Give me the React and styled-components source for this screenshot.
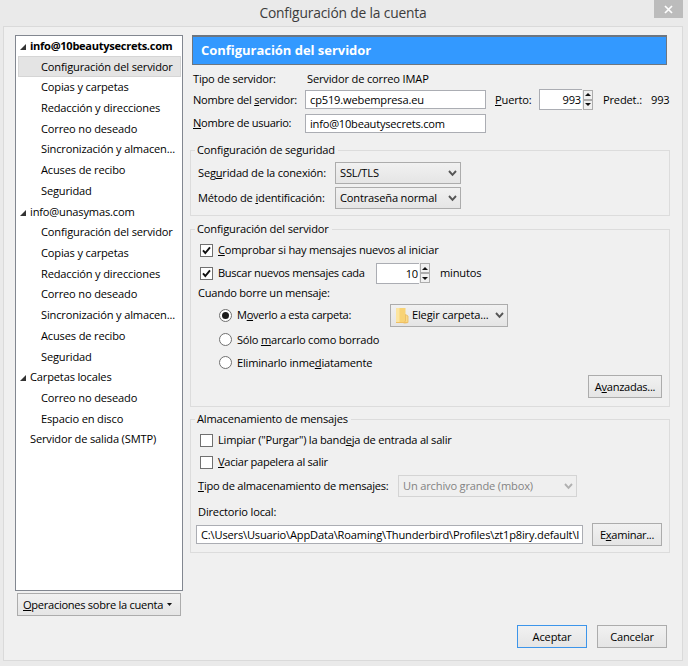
import React from 'react';
import styled, { createGlobalStyle } from 'styled-components';

const GlobalStyle = createGlobalStyle`
    * {
        box-sizing: border-box;
    }
    body {
        margin: 0;
        background: #eaeaea;
        color: #000;
        font-family: 'Open Sans', 'Noto Sans', sans-serif;
        font-size: 11.1px;
        line-height: 16px;
        letter-spacing: -0.17px;
    }
    u {
        text-underline-offset: 1px;
        text-decoration-thickness: 1px;
        text-decoration-skip-ink: none;
    }
`;

const Window = styled.div`
    width: 688px;
    height: 666px;
    overflow: hidden;
    background: #eaeaea;
`;

const TitleBar = styled.div`
    display: grid;
    grid-template-columns: 29px 1fr 29px;
    height: 26px;
    padding: 0 5px 0 3px;
`;

const Title = styled.div`
    grid-column: 2;
    text-align: center;
    color: #3c3c3c;
    font-size: 13.8px;
    line-height: 26px;
`;

const CloseButton = styled.div`
    display: flex;
    align-items: center;
    justify-content: center;
    width: 29px;
    height: 18px;
    background: #bcbcbc;
`;

const Client = styled.div`
    display: flex;
    width: 680px;
    height: 635px;
    margin-left: 3px;
    padding: 8px 0 0 11px;
    border: 1px solid #dadada;
    background: #f0f0f0;
`;

const Sidebar = styled.div`
    flex: none;
    width: 168px;
    margin-right: 7px;
`;

const Tree = styled.div`
    height: 556px;
    padding: 0 1px 0 2px;
    border: 1px solid #828790;
    background: #fff;
`;

const TreeRow = styled.div`
    display: flex;
    align-items: center;
    height: 20.72px;
    padding-left: ${props => (props.child ? 22 : 1)}px;
    white-space: nowrap;
    font-weight: ${props => (props.bold ? 700 : 400)};
    border: 1px solid ${props => (props.selected ? '#d5d5d5' : 'transparent')};
    background: ${props => (props.selected ? '#e4e4e4' : 'none')};
    &:first-child {
        height: 20.2px;
    }
`;

const Twisty = styled.div`
    display: flex;
    width: 10px;
    padding: 2px 0 0 0;
`;

const Text = styled.span`
    flex: none;
    width: ${props => (props.w ? props.w + 'px' : 'auto')};
    white-space: nowrap;
    letter-spacing: ${props => (props.track ? props.track + 'px' : 'inherit')};
`;

const Button = styled.div`
    display: flex;
    flex: none;
    align-items: center;
    justify-content: center;
    width: ${props => props.w}px;
    height: 23px;
    border: 1px solid ${props => (props.primary ? '#3d95ea' : '#acacac')};
    background: linear-gradient(#f1f1f1, #e5e5e5);
`;

const AccountButton = styled(Button)`
    justify-content: flex-start;
    gap: 4px;
    margin: 2px 0 0 2px;
    padding-left: 5px;
`;

const Panel = styled.div`
    width: 481px;
`;

const Header = styled.div`
    width: 475px;
    height: 30px;
    margin-left: 2px;
    padding-left: 8px;
    border: 1px solid #6d7680;
    border-top-width: 2px;
    background: #3399ff;
    color: #fff;
    font-size: 13px;
    font-weight: 700;
    line-height: 27px;
    letter-spacing: -0.03px;
`;

const Row = styled.div`
    display: flex;
    align-items: center;
    height: ${props => props.h}px;
    padding-left: ${props => props.indent || 0}px;
`;

const TypeRow = styled(Row)`
    padding-top: 3px;
`;

const UserRow = styled(Row)`
    padding-bottom: 1px;
`;

const PathRow = styled(Row)`
    margin-left: -2px;
`;

const Input = styled.div`
    flex: none;
    width: ${props => props.w}px;
    height: 19px;
    padding: 0 2px 0 4px;
    border: 1px solid #abadb3;
    background: #fff;
    line-height: 18px;
    white-space: nowrap;
`;

const Number = styled.div`
    width: 43px;
    height: 21px;
    padding-right: 1px;
    border: 1px solid #abadb3;
    border-right: none;
    background: #fff;
    line-height: 20px;
    text-align: right;
`;

const Arrows = styled.div`
    display: flex;
    flex-direction: column;
    margin-left: 1px;
`;

const Arrow = styled.div`
    display: flex;
    align-items: center;
    justify-content: center;
    width: 10px;
    height: 10px;
    border: 1px solid #acacac;
    background: #f0f0f0;
`;

const SelectBox = styled.div`
    display: flex;
    flex: none;
    align-items: center;
    justify-content: space-between;
    width: ${props => props.w}px;
    height: ${props => props.h || 22}px;
    padding: 0 3px 0 4px;
    border: 1px solid ${props => (props.disabled ? '#d4d4d4' : '#acacac')};
    background: ${props => (props.disabled ? '#efefef' : 'linear-gradient(#f1f1f1, #e5e5e5)')};
    color: ${props => (props.disabled ? '#838383' : '#000')};
`;

const SelectValue = styled.div`
    display: flex;
    align-items: center;
    gap: 3px;
`;

const Group = styled.div`
    width: 480px;
    height: ${props => props.h}px;
    margin-top: ${props => props.top}px;
    padding-left: 7px;
    border: 1px solid #dcdcdc;
`;

const Legend = styled.div`
    width: max-content;
    height: 16px;
    margin: -9px 0 0 -3px;
    padding: 0 3px 0 2px;
    background: #f0f0f0;
`;

const Box = styled.div`
    display: flex;
    flex: none;
    align-items: center;
    justify-content: center;
    width: 13px;
    height: 13px;
    margin: 0 5px 0 2px;
    border: 1px solid #707070;
    background: #fff;
`;

const Dot = styled(Box)`
    margin: 0 5px 0 0;
    border-radius: 50%;
    &::after {
        content: '';
        width: 7px;
        height: 7px;
        border-radius: 50%;
        background: ${props => (props.checked ? '#1c1c1c' : 'none')};
    }
`;

const Spacer = styled.div`
    flex: none;
    width: ${props => props.w}px;
`;

const Footer = styled.div`
    display: flex;
    gap: 10px;
    margin: 72px 0 0 327px;
`;

const Check = () => (
    <Box>
        <svg width="11" height="11" viewBox="0 0 11 11">
            <path d="M2 5.4 4.3 8 9 2.4" fill="none" stroke="#111" strokeWidth="1.9" />
        </svg>
    </Box>
);

const Chevron = ({ color = '#555' }) => (
    <svg width="9" height="8" viewBox="0 0 9 8">
        <path d="M1 2 4.5 5.8 8 2" fill="none" stroke={color} strokeWidth="1.9" />
    </svg>
);

const Folder = () => (
    <svg width="14" height="17" viewBox="0 0 14 17">
        <path d="M1 2 2 1h8.5v15H1z" fill="#f8d375" />
        <path d="M1 2 2 1h2.5v15H1z" fill="#fce5a0" />
        <path d="M10.5 7.5 13 9v6.5l-2.5.5h-2l2-2z" fill="#f9da8a" stroke="#eab95c" strokeWidth=".8" />
        <path d="M1 15.5h11" stroke="#efbf63" />
    </svg>
);

const Select = ({ w, h, disabled, icon, children }) => (
    <SelectBox w={w} h={h} disabled={disabled}>
        <SelectValue>
            {icon}
            <Text>{children}</Text>
        </SelectValue>
        <Chevron color={disabled ? '#b0b0b0' : '#555'} />
    </SelectBox>
);

const Spinner = ({ value }) => (
    <>
        <Number>{value}</Number>
        <Arrows>
            <Arrow>
                <svg width="6" height="3"><path d="M0 3 3 0 6 3z" fill="#111" /></svg>
            </Arrow>
            <Arrow>
                <svg width="6" height="3"><path d="M0 0h6L3 3z" fill="#111" /></svg>
            </Arrow>
        </Arrows>
    </>
);

const accountPages = [
    { label: 'Configuración del servidor' },
    { label: 'Copias y carpetas' },
    { label: 'Redacción y direcciones' },
    { label: 'Correo no deseado' },
    { label: 'Sincronización y almacen...' },
    { label: 'Acuses de recibo' },
    { label: 'Seguridad' }
];

const tree = [
    { label: 'info@10beautysecrets.com', bold: true, open: true, track: -0.3 },
    ...accountPages.map((page, i) => ({ ...page, child: true, selected: i === 0 })),
    { label: 'info@unasymas.com', open: true },
    ...accountPages.map(page => ({ ...page, child: true })),
    { label: 'Carpetas locales', open: true },
    { label: 'Correo no deseado', child: true },
    { label: 'Espacio en disco', child: true },
    { label: 'Servidor de salida (SMTP)' }
];

const App = () => {
    return (
        <Window>
            <GlobalStyle />
            <TitleBar>
                <Title>Configuración de la cuenta</Title>
                <CloseButton>
                    <svg width="9" height="9" viewBox="0 0 9 9">
                        <path d="M1 1 8 8M8 1 1 8" stroke="#fff" strokeWidth="1.7" />
                    </svg>
                </CloseButton>
            </TitleBar>
            <Client>
                <Sidebar>
                    <Tree>
                        {tree.map((item, i) => (
                            <TreeRow key={i} child={item.child} bold={item.bold} selected={item.selected}>
                                {!item.child && (
                                    <Twisty>
                                        {item.open && (
                                            <svg width="6" height="6"><path d="M6 0v6H0z" fill="#333" /></svg>
                                        )}
                                    </Twisty>
                                )}
                                <Text track={item.track}>{item.label}</Text>
                            </TreeRow>
                        ))}
                    </Tree>
                    <AccountButton w={164}>
                        <Text track={-0.29}><u>O</u>peraciones sobre la cuenta</Text>
                        <svg width="5" height="3"><path d="M0 0h5L2.5 3z" fill="#111" /></svg>
                    </AccountButton>
                </Sidebar>
                <Panel>
                    <Header>Configuración del servidor</Header>
                    <TypeRow h={24} indent={3}>
                        <Text w={114} track={-0.22}>Tipo de servidor:</Text>
                        <Text>Servidor de correo IMAP</Text>
                    </TypeRow>
                    <Row h={21} indent={3}>
                        <Text w={112} track={-0.3}>Nombre del <u>s</u>ervidor:</Text>
                        <Input w={181}>cp519.webempresa.eu</Input>
                        <Spacer w={9} />
                        <Text w={44}><u>P</u>uerto:</Text>
                        <Spinner value="993" />
                        <Spacer w={10} />
                        <Text w={48}>Predet.:</Text>
                        <Text>993</Text>
                    </Row>
                    <UserRow h={27} indent={3}>
                        <Text w={112} track={-0.3}><u>N</u>ombre de usuario:</Text>
                        <Input w={181}><Text track={-0.22}>info@10beautysecrets.com</Text></Input>
                    </UserRow>
                    <Group h={66} top={13}>
                        <Legend>Configuración de seguridad</Legend>
                        <Row h={30}>
                            <Text w={137} track={-0.2}>Seg<u>u</u>ridad de la conexión:</Text>
                            <Select w={126}>SSL/TLS</Select>
                        </Row>
                        <Row h={20}>
                            <Text w={137}>Método de <u>i</u>dentificación:</Text>
                            <Select w={126}>Contraseña normal</Select>
                        </Row>
                    </Group>
                    <Group h={178} top={13}>
                        <Legend>Configuración del servidor</Legend>
                        <Row h={26}>
                            <Check />
                            <Text track={-0.22}><u>C</u>omprobar si hay mensajes nuevos al iniciar</Text>
                        </Row>
                        <Row h={20}>
                            <Check />
                            <Text w={158} track={-0.3}>Buscar nuevos mensajes cada</Text>
                            <Spinner value="10" />
                            <Spacer w={10} />
                            <Text>minutos</Text>
                        </Row>
                        <Row h={20}>
                            <Text track={-0.26}>Cuando borre un mensaje:</Text>
                        </Row>
                        <Row h={24} indent={21}>
                            <Dot checked />
                            <Text w={153} track={-0.3}>M<u>o</u>verlo a esta carpeta:</Text>
                            <Select w={118} h={23} icon={<Folder />}>Elegir carpeta...</Select>
                        </Row>
                        <Row h={25} indent={21}>
                            <Dot />
                            <Text track={-0.24}>Sólo <u>m</u>arcarlo como borrado</Text>
                        </Row>
                        <Row h={21} indent={21}>
                            <Dot />
                            <Text track={-0.2}>Eliminarlo inme<u>d</u>iatamente</Text>
                        </Row>
                        <Row h={27} indent={390}>
                            <Button w={74}><Text track={-0.3}>A<u>v</u>anzadas...</Text></Button>
                        </Row>
                    </Group>
                    <Group h={134} top={12}>
                        <Legend>Almacenamiento de mensajes</Legend>
                        <Row h={26}>
                            <Box />
                            <Text track={-0.22}>Limpiar ("Purgar") la band<u>e</u>ja de entrada al salir</Text>
                        </Row>
                        <Row h={18}>
                            <Box />
                            <Text track={-0.28}><u>V</u>aciar papelera al salir</Text>
                        </Row>
                        <Row h={29}>
                            <Text w={200} track={-0.23}><u>T</u>ipo de almacenamiento de mensajes:</Text>
                            <Select w={179} disabled>Un archivo grande (mbox)</Select>
                        </Row>
                        <Row h={24}>
                            <Text>Directorio local:</Text>
                        </Row>
                        <PathRow h={21}>
                            <Input w={387}>
                                <Text>C:\Users\Usuario\AppData\Roaming\Thunderbird\Profiles\zt1p8iry.default\I</Text>
                            </Input>
                            <Spacer w={9} />
                            <Button w={70}><Text track={-0.3}>E<u>x</u>aminar...</Text></Button>
                        </PathRow>
                    </Group>
                    <Footer>
                        <Button w={70} primary><Text>Aceptar</Text></Button>
                        <Button w={70}><Text>Cancelar</Text></Button>
                    </Footer>
                </Panel>
            </Client>
        </Window>
    );
};

export default App;
